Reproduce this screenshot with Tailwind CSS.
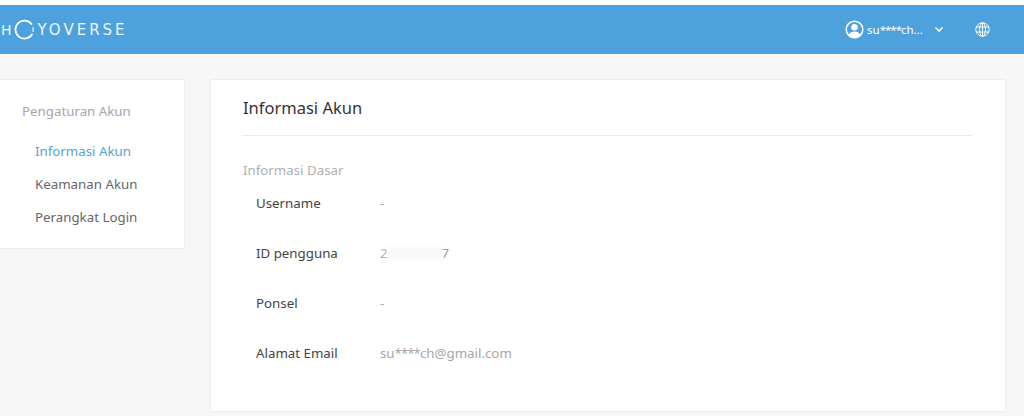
<!DOCTYPE html>
<html lang="en">
<head>
    <meta charset="UTF-8">
    <title>Informasi Akun</title>
    <script src="https://cdn.jsdelivr.net/npm/@tailwindcss/browser@4"></script>
</head>
<body class="bg-[#f7f7f8] h-[416px] w-[1024px] overflow-hidden font-['Noto_Sans',sans-serif]">
    <div class="h-[5px] bg-white"></div>

    <!-- Header -->
    <header class="h-[49px] bg-[#4da1dc] flex items-center text-white">
        <div class="flex items-center h-full pl-[1px] w-[200px]">
            <span class="pt-[1px] font-['DejaVu_Sans',sans-serif] text-[14px] leading-none text-white/90">H</span>
            <svg class="ml-[2px] mr-[3px]" width="21" height="21" viewBox="0 0 21 21" fill="none" stroke="#fff" stroke-width="1.700" stroke-linecap="round">
                <path d="M17.500 5A9 9 0 1 0 18 15.500"/>
                <path d="M19 8.500A9 9 0 0 1 19 12.500" stroke-width="1.100"/>
            </svg>
            <span class="pt-[1px] font-['DejaVu_Sans',sans-serif] text-[15px] leading-none tracking-[3px] text-white/90">YOVERSE</span>
        </div>
        <div class="ml-auto flex items-center">
            <svg width="19" height="19" viewBox="0 0 19 19" fill="none">
                <circle cx="9.500" cy="9.500" r="8.300" stroke="#fff" stroke-width="1.500"/>
                <circle cx="9.500" cy="7.300" r="3.300" fill="#fff"/>
                <path d="M3.800 15.200C4.600 12.300 6.600 11.400 9.500 11.400S14.400 12.300 15.200 15.200A8 8 0 0 1 3.800 15.200Z" fill="#fff"/>
            </svg>
            <span class="ml-[3px] w-[55px] text-[11.500px] leading-none whitespace-nowrap">su<span class="tracking-[-1px]">****</span>ch...</span>
            <svg class="ml-[12px]" width="10" height="7" viewBox="0 0 10 7" fill="none" stroke="#fff" stroke-width="1.700">
                <path d="M1.500 1.500L5 5L8.500 1.500"/>
            </svg>
            <svg class="ml-[31px] mr-[34px]" width="15" height="15" viewBox="0 0 15 15" fill="none" stroke="#fff" stroke-width="1">
                <circle cx="7.500" cy="7.500" r="6.700"/>
                <ellipse cx="7.500" cy="7.500" rx="3" ry="6.700"/>
                <path d="M1 5H14M1 10H14M7.500 1V14"/>
            </svg>
        </div>
    </header>

    <div class="flex items-start gap-[25px] pt-[25px] pr-[18px]">
        <!-- Sidebar -->
        <aside class="w-[185px] h-[170px] shrink-0 bg-white border border-l-0 border-[#eeeeee] rounded-r-[2px] pl-[22px] pt-[22px]">
            <div class="text-[13.300px] leading-[18px] text-[#a6a6a6]">Pengaturan Akun</div>
            <nav class="mt-[22px] pl-[13px] flex flex-col gap-[15px] text-[13.300px] leading-[18px] text-[#666666]">
                <a class="text-[#5a9fd0]">Informasi Akun</a>
                <a>Keamanan Akun</a>
                <a>Perangkat Login</a>
            </nav>
        </aside>

        <!-- Main card -->
        <main class="flex-1 h-[333px] bg-white border border-[#eeeeee] rounded-[2px] pl-[32px] pr-[33px]">
            <h1 class="h-[56px] pt-[17px] text-[16.500px] leading-[22px] text-[#333333] border-b border-[#e9e9e9]">Informasi Akun</h1>
            <div class="mt-[25px] text-[13.300px] leading-[18px] text-[#b0b0b0]">Informasi Dasar</div>
            <dl class="-mt-[1px] pl-[13px] text-[13.300px] leading-[18px]">
                <div class="flex items-center h-[50px]">
                    <dt class="w-[124px] text-[#444444]">Username</dt>
                    <dd class="text-[#b0b0b0]">-</dd>
                </div>
                <div class="flex items-center h-[50px]">
                    <dt class="w-[124px] text-[#444444]">ID pengguna</dt>
                    <dd class="text-[#b0b0b0] flex items-center">
                        <span>2</span>
                        <span class="w-[54px] h-[13px] bg-[#f8f8f8] blur-[2px]"></span>
                        <span class="text-[#999999]">7</span>
                    </dd>
                </div>
                <div class="flex items-center h-[50px]">
                    <dt class="w-[124px] text-[#444444]">Ponsel</dt>
                    <dd class="text-[#b0b0b0]">-</dd>
                </div>
                <div class="flex items-center h-[50px]">
                    <dt class="w-[124px] text-[#444444]">Alamat Email</dt>
                    <dd class="text-[#a6a6a6] whitespace-nowrap">su<span class="tracking-[-1px]">****</span>ch@gmail.com</dd>
                </div>
            </dl>
        </main>
    </div>
</body>
</html>
